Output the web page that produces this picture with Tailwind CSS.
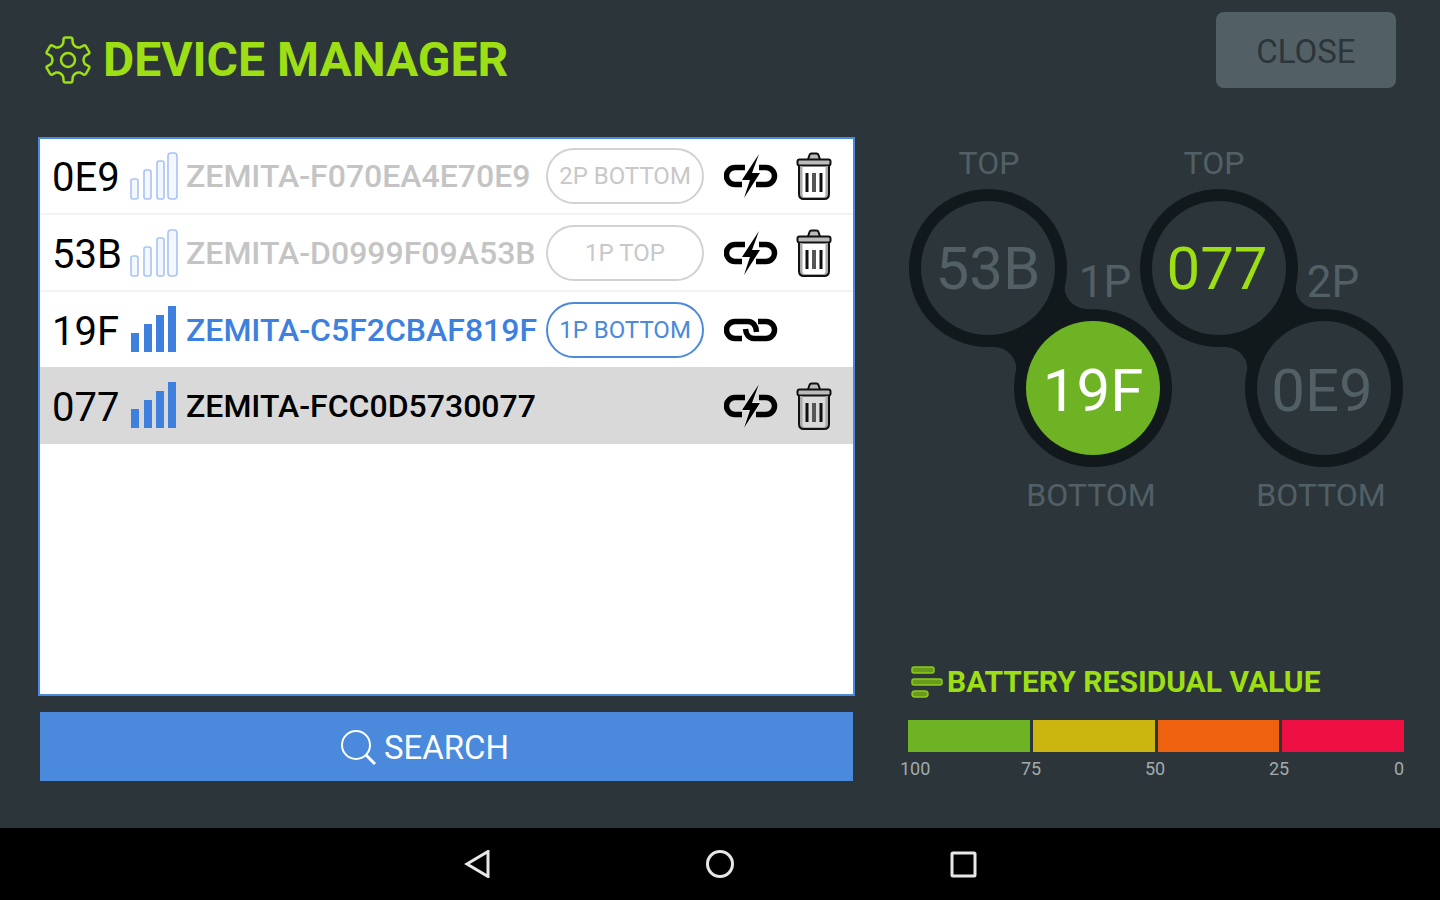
<!DOCTYPE html>
<html lang="en">
<head>
    <meta charset="UTF-8">
    <meta name="viewport" content="width=device-width, initial-scale=1.0">
    <title>Device Manager</title>
    <script src="https://cdn.jsdelivr.net/npm/@tailwindcss/browser@4"></script>
</head>
<body class="min-h-screen flex flex-col bg-[#2b353a] font-[Roboto,sans-serif]">
    <!-- Shared icons -->
    <svg class="hidden" aria-hidden="true">
        <symbol id="signal-off" viewBox="0 0 48 48">
            <g fill="#f3f7ff" stroke="#a9c3f3" stroke-width="1.6">
                <rect x="1" y="27" width="7" height="20" rx="2"/>
                <rect x="14" y="18" width="7" height="29" rx="2"/>
                <rect x="27" y="9" width="7" height="38" rx="2"/>
                <rect x="38" y="1" width="9" height="46" rx="3"/>
            </g>
        </symbol>
        <symbol id="signal-on" viewBox="0 0 48 48">
            <g fill="#3d80dd">
                <rect x="1" y="27" width="8" height="19"/>
                <rect x="14" y="18" width="8" height="28"/>
                <rect x="26" y="9" width="8" height="37"/>
                <rect x="38" y="0" width="8" height="46"/>
            </g>
        </symbol>
        <symbol id="unlink" viewBox="0 0 54 44">
            <g fill="none" stroke="#000" stroke-width="5.5">
                <path d="M21 13.500H11a8.500 8.500 0 0 0 0 17H18"/>
                <path d="M35 13.500h7a8.500 8.500 0 0 1 0 17H32"/>
            </g>
            <path d="M35 0 18 26h8L20 44 36 19h-8z" stroke="#fff" stroke-width="1.500" stroke-opacity=".6" paint-order="stroke"/>
        </symbol>
        <symbol id="link" viewBox="0 0 54 44">
            <g fill="none" stroke="#000" stroke-width="5.500">
                <path d="M18 30.500h-7a8.500 8.500 0 0 1 0-17H24c5 0 8 4 8.500 10.500"/>
                <path d="M34 13.500h8a8.500 8.500 0 0 1 0 17H30c-5 0-8-4-8.500-9.500"/>
            </g>
        </symbol>
        <symbol id="trash" viewBox="0 0 36 48">
            <g fill="none" stroke="#111" stroke-width="2" stroke-linejoin="round">
                <path d="M12 7.500 13.500 3q.5-1.500 2-1.500h5q1.500 0 2 1.500L24 7.500" fill="#bbb"/>
                <rect x="1.500" y="7.500" width="33" height="6" rx="2" fill="#bbb"/>
                <path d="M5 14v29q0 3.500 3.500 3.500h19q3.500 0 3.500-3.500V14" stroke="#aaa" stroke-width="3"/>
                <path d="M3 14v28q0 5 5 5h20q5 0 5-5V14"/>
            </g>
            <path d="M11 21v19M25 21v19" stroke="#111" stroke-width="3"/>
            <path d="M18 21v19" stroke="#555" stroke-width="4"/>
        </symbol>
    </svg>

    <header class="flex justify-between items-start px-11 pt-3">
        <h1 class="flex items-center gap-[11px] pt-5 text-5xl leading-14 font-bold text-[#9ddf14]">
            <svg class="w-12 h-12" viewBox="0 0 48 48" fill="none" stroke="currentColor" stroke-width="2.500" stroke-linejoin="round">
                <path d="M21.500 1.500h5q1.800 0 1.900 1.700l.4 4Q31 12 36.200 11.400l3.300-1.800q1.500-.9 2.400.5l3.300 5.700q.7 1.300-.6 2.100L41 19.800Q38 24 41 28.200l3.600 1.900q1.300.8.6 2.100l-3.300 5.700q-.9 1.400-2.400.5l-3.300-1.800Q31 36 28.800 40.800l-.4 4q-.1 1.700-1.900 1.700h-5q-1.800 0-1.900-1.700l-.4-4Q17 36 11.800 36.600l-3.300 1.800q-1.500.9-2.400-.5l-3.300-5.700q-.7-1.300.6-2.100L7 28.200Q10 24 7 19.800l-3.600-1.900q-1.300-.8-.6-2.100l3.300-5.700q.9-1.400 2.400-.5l3.300 1.800Q17 12 19.200 7.200l.4-4q.1-1.700 1.900-1.700z"/>
                <circle cx="24" cy="24" r="7"/>
            </svg>
            DEVICE MANAGER
        </h1>
        <button type="button" class="w-45 h-19 pt-1 rounded-lg bg-[#526066] text-[33px] text-[#2b353a]">CLOSE</button>
    </header>

    <main class="grow grid grid-cols-[817fr_500fr] gap-[49px] pl-[38px] pr-9 pt-[49px] pb-[47px]">
        <section class="flex flex-col gap-4">
            <ul class="grow border-2 border-[#4a89dc] bg-white">
                <li class="flex items-center h-19 pl-3 pr-[21px] border-b-2 border-[#f3f3f3]">
                    <span class="w-[78px] pt-1 text-[40px]">0E9</span>
                    <svg class="w-12 h-12"><use href="#signal-off"/></svg>
                    <span class="grow pl-2 text-[32px] font-medium text-[#c4c4c4]">ZEMITA-F070EA4E70E9</span>
                    <button type="button" class="w-[158px] h-14 rounded-full border-2 border-[#d2d2d2] text-2xl text-[#c8c8c8]">2P BOTTOM</button>
                    <button type="button" aria-label="Disconnect" class="ml-5"><svg class="w-[54px] h-11"><use href="#unlink"/></svg></button>
                    <button type="button" aria-label="Delete" class="ml-[18px]"><svg class="w-9 h-12"><use href="#trash"/></svg></button>
                </li>
                <li class="flex items-center h-[77px] pl-3 pr-[21px] border-b-2 border-[#f3f3f3]">
                    <span class="w-[78px] pt-1 text-[40px]">53B</span>
                    <svg class="w-12 h-12"><use href="#signal-off"/></svg>
                    <span class="grow pl-2 text-[32px] font-medium text-[#c4c4c4]">ZEMITA-D0999F09A53B</span>
                    <button type="button" class="w-[158px] h-14 rounded-full border-2 border-[#d2d2d2] text-2xl text-[#c8c8c8]">1P TOP</button>
                    <button type="button" aria-label="Disconnect" class="ml-5"><svg class="w-[54px] h-11"><use href="#unlink"/></svg></button>
                    <button type="button" aria-label="Delete" class="ml-[18px]"><svg class="w-9 h-12"><use href="#trash"/></svg></button>
                </li>
                <li class="flex items-center h-[75px] pl-3 pr-[21px]">
                    <span class="w-[78px] pt-1 text-[40px]">19F</span>
                    <svg class="w-12 h-12"><use href="#signal-on"/></svg>
                    <span class="grow pl-2 text-[32px] font-medium text-[#3d80dd]">ZEMITA-C5F2CBAF819F</span>
                    <button type="button" class="w-[158px] h-14 rounded-full border-2 border-[#4a89dc] text-2xl text-[#4a89dc]">1P BOTTOM</button>
                    <button type="button" aria-label="Connect" class="ml-5 mr-[54px]"><svg class="w-[54px] h-11"><use href="#link"/></svg></button>
                </li>
                <li class="flex items-center h-[77px] pl-3 pr-[21px] bg-[#d9d9d9]">
                    <span class="w-[78px] pt-1 text-[40px]">077</span>
                    <svg class="w-12 h-12"><use href="#signal-on"/></svg>
                    <span class="grow pl-2 text-[32px] font-medium">ZEMITA-FCC0D5730077</span>
                    <button type="button" aria-label="Disconnect" class="ml-5"><svg class="w-[54px] h-11"><use href="#unlink"/></svg></button>
                    <button type="button" aria-label="Delete" class="ml-[18px]"><svg class="w-9 h-12"><use href="#trash"/></svg></button>
                </li>
            </ul>
            <button type="button" class="flex items-center justify-center gap-2 h-[69px] mx-[2px] pt-[2px] pr-11 bg-[#4a89dc] text-[33px] text-white">
                <svg class="w-9 h-9" viewBox="0 0 36 36" fill="none" stroke="currentColor" stroke-width="2">
                    <circle cx="16" cy="15" r="14"/>
                    <path d="m26 25 9 9" stroke-width="3"/>
                </svg>
                SEARCH
            </button>
        </section>

        <section class="flex flex-col justify-between pt-2">
            <svg class="w-full" viewBox="0 0 500 372" text-anchor="middle">
                <!-- 1P -->
                <g fill="#12191d">
                    <circle cx="84" cy="123" r="79"/>
                    <circle cx="189" cy="243" r="79"/>
                    <path d="M161 138A22 22 0 0 0 184 164L112 228A22 22 0 0 0 89 202z"/>
                </g>
                <circle cx="84" cy="123" r="67" fill="#2b353a"/>
                <circle cx="189" cy="243" r="67" fill="#6db324"/>
                <!-- 2P -->
                <g fill="#12191d">
                    <circle cx="315" cy="123" r="79"/>
                    <circle cx="420" cy="243" r="79"/>
                    <path d="M392 138A22 22 0 0 0 415 164L343 228A22 22 0 0 0 320 202z"/>
                </g>
                <circle cx="315" cy="123" r="67" fill="#2b353a"/>
                <circle cx="420" cy="243" r="67" fill="#2b353a"/>
                <g class="text-6xl">
                    <text x="84" y="144" fill="#526066">53B</text>
                    <text x="189" y="266" fill="#fff">19F</text>
                    <text x="313" y="144" fill="#9ddf14">077</text>
                    <text x="418" y="266" fill="#526066">0E9</text>
                </g>
                <g class="text-[44px]" fill="#526066">
                    <text x="201" y="152">1P</text>
                    <text x="429" y="152">2P</text>
                </g>
                <g class="text-[32px]" fill="#526066">
                    <text x="85" y="29">TOP</text>
                    <text x="310" y="29">TOP</text>
                    <text x="187" y="361">BOTTOM</text>
                    <text x="417" y="361">BOTTOM</text>
                </g>
            </svg>

            <div class="pl-1">
                <h2 class="flex items-center gap-1 text-[30px] leading-10 font-bold text-[#9ddf14]">
                    <svg class="w-8 h-8 ml-[3px]" viewBox="0 0 32 32" fill="#6a9a1b" stroke="#8ccb1a" stroke-width="1.500">
                        <rect x="1" y="1" width="22" height="6" rx="2"/>
                        <rect x="1" y="13" width="30" height="6" rx="2"/>
                        <rect x="1" y="25" width="16" height="6" rx="3"/>
                    </svg>
                    BATTERY RESIDUAL VALUE
                </h2>
                <div class="grid grid-cols-4 gap-[3px] h-8 mt-[18px]">
                    <div class="bg-[#6db324]"></div>
                    <div class="bg-[#cbb60f]"></div>
                    <div class="bg-[#ee620f]"></div>
                    <div class="bg-[#ef1043]"></div>
                </div>
                <div class="grid grid-cols-4 mt-[5px] text-lg leading-6 text-[#a3aaad]">
                    <span class="-ml-2">100</span>
                    <span class="-ml-[11px]">75</span>
                    <span class="-ml-[11px]">50</span>
                    <span class="-ml-[11px] flex justify-between">25<span>0</span></span>
                </div>
            </div>
        </section>
    </main>

    <nav class="flex justify-center h-18 bg-black text-[#e8e8e8]">
        <div class="flex items-center gap-[215px]">
            <button type="button" aria-label="Back"><svg class="w-7 h-7" viewBox="0 0 28 28" fill="none" stroke="currentColor" stroke-width="3"><path d="M25 1.500v25L4 14z"/></svg></button>
            <button type="button" aria-label="Home"><svg class="w-7 h-7" viewBox="0 0 28 28" fill="none" stroke="currentColor" stroke-width="3"><circle cx="14" cy="14" r="12.500"/></svg></button>
            <button type="button" aria-label="Recent apps"><svg class="w-7 h-7" viewBox="0 0 28 28" fill="none" stroke="currentColor" stroke-width="3"><rect x="3" y="3" width="23" height="23" rx="1"/></svg></button>
        </div>
    </nav>
</body>
</html>
